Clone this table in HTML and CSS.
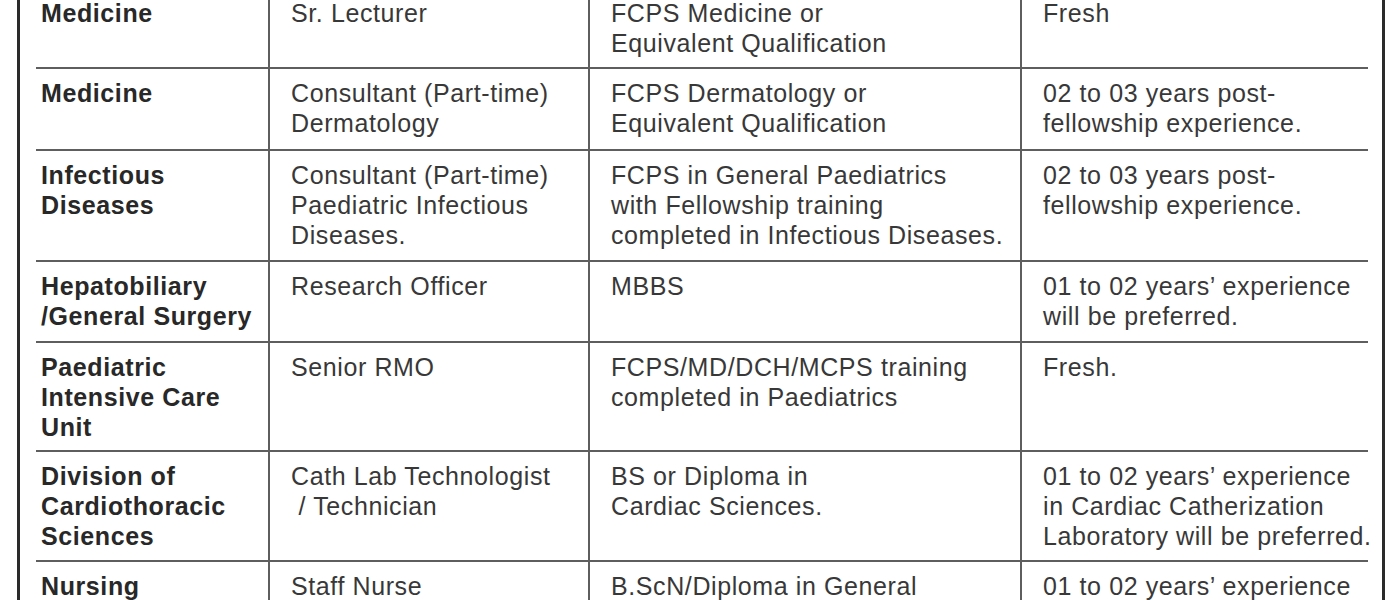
FILE: index.html
```html
<!DOCTYPE html>
<html lang="en">
<head>
<meta charset="utf-8">
<title>Vacancies</title>
<link rel="stylesheet" href="styles.css">
</head>
<body>
<div class="frame">
  <div class="table">
    <div class="cell dept">Medicine</div>
    <div class="cell">Sr. Lecturer</div>
    <div class="cell">FCPS Medicine or<br>Equivalent Qualification</div>
    <div class="cell">Fresh</div>

    <div class="cell dept">Medicine</div>
    <div class="cell">Consultant (Part-time)<br>Dermatology</div>
    <div class="cell">FCPS Dermatology or<br>Equivalent Qualification</div>
    <div class="cell">02 to 03 years post-<br>fellowship experience.</div>

    <div class="cell dept">Infectious<br>Diseases</div>
    <div class="cell">Consultant (Part-time)<br>Paediatric Infectious<br>Diseases.</div>
    <div class="cell">FCPS in General Paediatrics<br>with Fellowship training<br>completed in Infectious Diseases.</div>
    <div class="cell">02 to 03 years post-<br>fellowship experience.</div>

    <div class="cell dept">Hepatobiliary<br>/General Surgery</div>
    <div class="cell">Research Officer</div>
    <div class="cell">MBBS</div>
    <div class="cell">01 to 02 years’ experience<br>will be preferred.</div>

    <div class="cell dept">Paediatric<br>Intensive Care<br>Unit</div>
    <div class="cell">Senior RMO</div>
    <div class="cell">FCPS/MD/DCH/MCPS training<br>completed in Paediatrics</div>
    <div class="cell">Fresh.</div>

    <div class="cell dept">Division of<br>Cardiothoracic<br>Sciences</div>
    <div class="cell">Cath Lab Technologist<br>&nbsp;/ Technician</div>
    <div class="cell">BS or Diploma in<br>Cardiac Sciences.</div>
    <div class="cell">01 to 02 years’ experience<br>in Cardiac Catherization<br>Laboratory will be preferred.</div>

    <div class="cell dept">Nursing</div>
    <div class="cell">Staff Nurse</div>
    <div class="cell">B.ScN/Diploma in General<br>Nursing &amp; Midwifery</div>
    <div class="cell">01 to 02 years’ experience<br>will be preferred.</div>
  </div>
</div>
</body>
</html>
```

FILE: styles.css
```css
html, body {
  margin: 0;
  padding: 0;
  background: #ffffff;
}

body {
  font-family: "Liberation Sans", Arial, sans-serif;
  color: #383838;
  overflow: hidden;
}

.frame {
  margin-left: 17px;
  border-left: 3px solid #2a2a2a;
  border-right: 3px solid #2a2a2a;
  padding: 0 14px 0 16px;
  box-sizing: border-box;
  width: 1368px;
  min-height: 640px;
}

.table {
  margin-top: -11px;
  display: grid;
  grid-template-columns: 232px 320px 432px 348px;
  grid-template-rows: 80px 82px 111px 81px 109px 110px auto;
}

.cell {
  font-size: 25px;
  line-height: 30px;
  letter-spacing: 0.6px;
  padding: 9px 0 10px 21px;
  border-bottom: 2px solid #5e5e5e;
  border-left: 2px solid #5e5e5e;
  white-space: nowrap;
}

.cell.dept {
  border-left: none;
  padding-left: 5px;
  font-weight: bold;
  color: #282828;
}
```
